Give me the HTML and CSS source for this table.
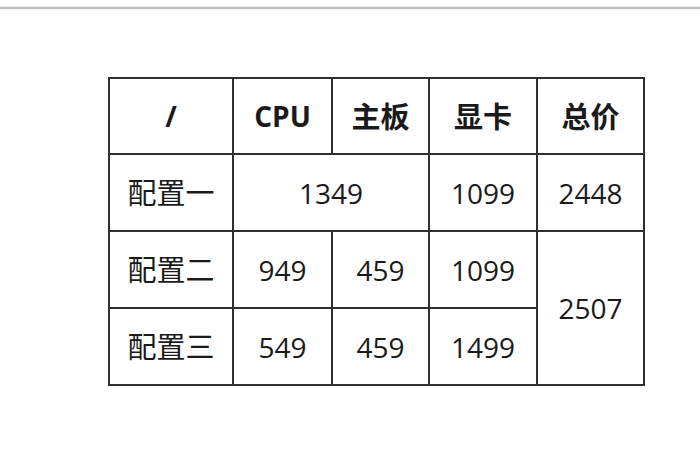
FILE: index.html
```html
<!DOCTYPE html>
<html lang="zh-CN">
<head>
<meta charset="utf-8">
<title>配置对比</title>
<link rel="stylesheet" href="styles.css">
</head>
<body>
<div class="rule"></div>
<table class="spec">
  <colgroup>
    <col class="c1"><col class="c2"><col class="c3"><col class="c4"><col class="c5">
  </colgroup>
  <tr class="head">
    <th class="first">/</th>
    <th>CPU</th>
    <th class="cjk">主板</th>
    <th class="cjk">显卡</th>
    <th class="cjk">总价</th>
  </tr>
  <tr class="r2">
    <td class="first cjk">配置一</td>
    <td colspan="2">1349</td>
    <td>1099</td>
    <td>2448</td>
  </tr>
  <tr class="r3">
    <td class="first cjk">配置二</td>
    <td>949</td>
    <td>459</td>
    <td>1099</td>
    <td rowspan="2">2507</td>
  </tr>
  <tr class="r4">
    <td class="first cjk">配置三</td>
    <td>549</td>
    <td>459</td>
    <td>1499</td>
  </tr>
</table>
</body>
</html>
```

FILE: styles.css
```css
html, body {
  margin: 0;
  padding: 0;
  background: #ffffff;
}

body {
  font-family: "Open Sans", "Noto Sans CJK SC", sans-serif;
  color: #1a1a1a;
}

.rule {
  margin-top: 6px;
  height: 2px;
  background: #bdbdbd;
  border-top: 1px solid #ececec;
  border-bottom: 1px solid #f2f2f2;
}

.spec {
  margin: 67px 0 0 108px;
  border-collapse: separate;
  border-spacing: 0;
  table-layout: fixed;
  width: 537px;
}

.c1 { width: 126px; }
.c2 { width: 99px; }
.c3 { width: 97px; }
.c4 { width: 108px; }
.c5 { width: 107px; }

.spec th,
.spec td {
  box-sizing: border-box;
  padding: 0;
  text-align: center;
  vertical-align: middle;
  font-size: 28px;
  border-right: 2px solid #2f2f2f;
  border-bottom: 2px solid #2f2f2f;
  line-height: 1;
}

.spec .cjk {
  font-size: 29px;
}

.spec th {
  font-weight: bold;
  border-top: 2px solid #2f2f2f;
  height: 78px;
}

.spec .first {
  border-left: 2px solid #2f2f2f;
}

.spec td {
  font-weight: normal;
}

.r2 td { height: 77px; }
.r3 td { height: 77px; }
.r4 td { height: 77px; }
```
